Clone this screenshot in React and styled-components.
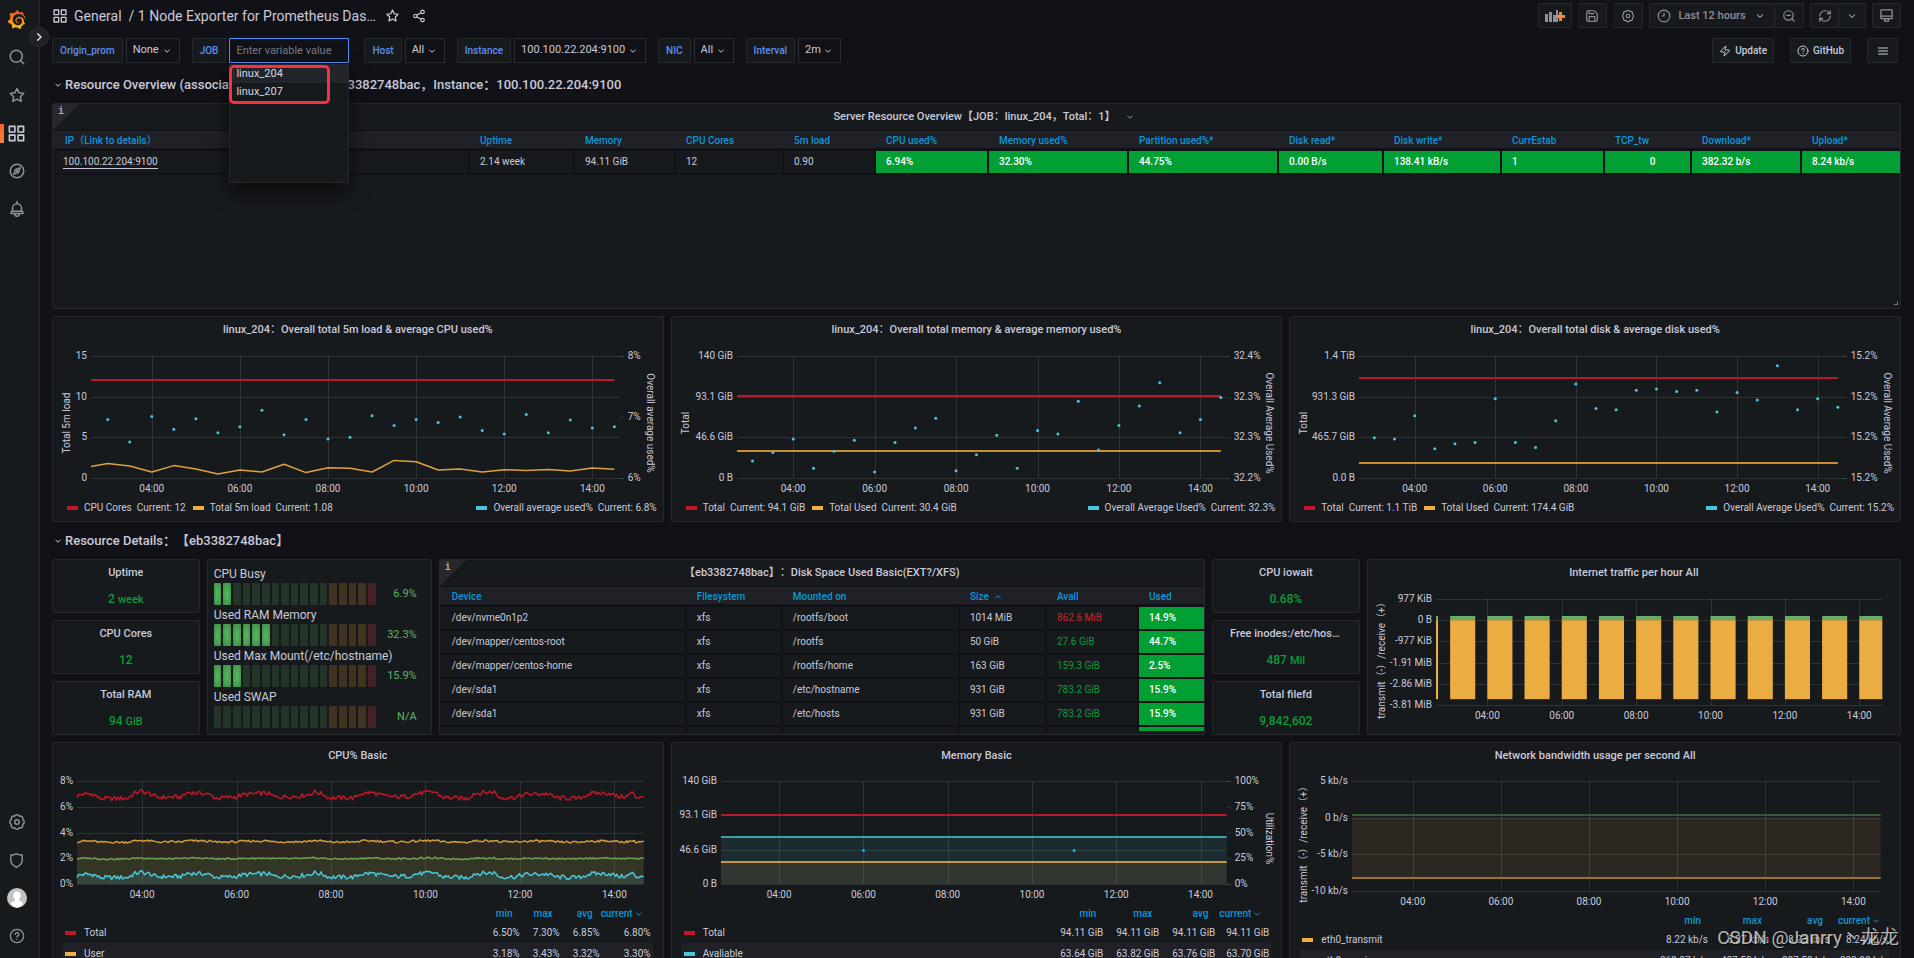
import React, { useLayoutEffect, useRef, useState } from 'react';
import styled, { createGlobalStyle, css } from 'styled-components';
import { RefreshCw, Share2, Zap, ZoomOut, Save } from 'lucide-react';
import { SiGrafana } from 'react-icons/si';

const c = {
  canvas: '#111217',
  panel: '#171a1d',
  border: '#25272c',
  soft: '#202126',
  text: '#c9c9d9',
  muted: '#8e8f9b',
  link: '#5c8ff0',
  head: '#0d95d6',
  cell: '#029f34',
  green: '#0b9b3a',
  red: '#b9182b',
  swatchRed: '#c4162a',
  amber: '#efae43',
  cyan: '#4bc5da',
  grid: 'rgba(204, 214, 214, 0.13)',
};

const GlobalStyle = createGlobalStyle`
  * { box-sizing: border-box; }
  body {
    margin: 0;
    background: ${c.canvas};
    color: ${c.text};
    font: 400 10px/16px Roboto, "Noto Sans CJK SC", sans-serif;
    text-spacing-trim: space-all;
  }
  button, input, select { font: inherit; color: inherit; }
  a { color: inherit; text-decoration: none; }
`;

/* ---------- icons ---------- */

const Svg = styled.svg`
  display: block;
  flex: none;
  fill: ${(p) => (p.$solid ? 'currentColor' : 'none')};
  stroke: ${(p) => (p.$solid ? 'none' : 'currentColor')};
  stroke-width: 2;
  stroke-linecap: round;
  stroke-linejoin: round;
`;

const Icon = ({ size = 16, solid, children }) => (
  <Svg $solid={solid} width={size} height={size} viewBox="0 0 24 24" aria-hidden="true">
    {children}
  </Svg>
);

const gearPath = (() => {
  const pt = (k) => {
    const a = ((22.5 + 45 * k) * Math.PI) / 180;
    return `${(12 + 8.2 * Math.cos(a)).toFixed(2)} ${(12 + 8.2 * Math.sin(a)).toFixed(2)}`;
  };
  let d = `M${pt(0)}`;
  for (let k = 1; k <= 8; k += 1) d += `A3.4 3.4 0 0 1 ${pt(k)}`;
  return `${d}Z`;
})();

const Gear = (p) => (
  <Icon {...p}>
    <path d={gearPath} />
    <circle cx="12" cy="12" r="3" />
  </Icon>
);
const Search = (p) => (
  <Icon {...p}>
    <circle cx="11" cy="11" r="8" />
    <path d="M17 17l4 4" />
  </Icon>
);
const Star = (p) => (
  <Icon {...p}>
    <path d="M12 3.4l2.8 5.7 6.2.9-4.5 4.4 1.1 6.2-5.6-3-5.6 3 1.1-6.2L3 10l6.2-.9z" />
  </Icon>
);
const Apps = (p) => (
  <Icon {...p}>
    <path d="M3 3h7v7H3zM14 3h7v7h-7zM3 14h7v7H3zM14 14h7v7h-7z" />
  </Icon>
);
const Compass = (p) => (
  <Icon {...p}>
    <circle cx="12" cy="12" r="9" />
    <path d="M16.2 7.8l-2.2 6.2-6.2 2.2 2.2-6.2z" />
    <circle cx="12" cy="12" r="0.6" />
  </Icon>
);
const Bell = (p) => (
  <Icon {...p}>
    <path d="M12 2v3M6 15v-4a6 6 0 0 1 12 0v4M4 18v-1a2 2 0 0 1 2-2h12a2 2 0 0 1 2 2v1zM9 18.500a3 3 0 0 0 6 0" />
  </Icon>
);
const Shield = (p) => (
  <Icon {...p}>
    <path d="M4 4c3 .6 5.600 0 8-1.600C14.400 4 17 4.600 20 4v8c0 4.200-4 7.600-8 9.800-4-2.200-8-5.600-8-9.800z" />
  </Icon>
);
const Help = (p) => (
  <Icon {...p}>
    <circle cx="12" cy="12" r="10" />
    <path d="M9.400 9.400a2.700 2.700 0 1 1 3.900 2.500c-.8.4-1.300.9-1.300 1.700M12 17v.1" />
  </Icon>
);
const Clock = (p) => (
  <Icon {...p}>
    <circle cx="12" cy="12" r="10" />
    <path d="M12 7v5H8.500" />
  </Icon>
);
const Display = (p) => (
  <Icon {...p}>
    <path d="M4 3h16a1 1 0 0 1 1 1v12a1 1 0 0 1-1 1H4a1 1 0 0 1-1-1V4a1 1 0 0 1 1-1zM3 13h18M9 17v4h6v-4" />
  </Icon>
);
const Bars = (p) => (
  <Icon {...p}>
    <path d="M3 6h18M3 12h18M3 18h18" />
  </Icon>
);
const Down = ({ size = 12 }) => (
  <Icon size={size}>
    <path d="M7.500 10l4.500 4.500L16.500 10" />
  </Icon>
);
const Up = ({ size = 14 }) => (
  <Icon size={size}>
    <path d="M7 14l5-4.500L17 14" />
  </Icon>
);
const AddPanel = () => (
  <svg width="20" height="14" viewBox="0 0 20 14" aria-hidden="true">
    <path fill="#8e8f9b" d="M0 5h3v8H0zM4 3h3v10H4zM8 6h3v7H8zM11 1h2v12h-2z" />
    <path fill="#f58b2c" d="M14 3h3v3h3v3h-3v3h-3V9h-2V6h2z" />
  </svg>
);

/* ---------- sidebar ---------- */

const Shell = styled.div`
  display: flex;
  height: 100vh;
  overflow: hidden;
  position: relative;
`;

const Sidebar = styled.nav`
  position: relative;
  flex: none;
  width: 40px;
  display: flex;
  flex-direction: column;
  justify-content: space-between;
  padding: 0 0 3px;
  background: ${c.panel};
  border-right: 1px solid ${c.border};
`;

const NavGroup = styled.div`
  display: flex;
  flex-direction: column;
  width: 33px;
`;

const NavLink = styled.a`
  display: flex;
  align-items: center;
  justify-content: center;
  height: 38px;
  color: ${(p) => (p.$active ? c.text : c.muted)};
  ${(p) =>
    p.$active &&
    css`
      background: linear-gradient(#f2622f, #f9813a) 0 50% / 4px 19px no-repeat;
    `}
`;

const Expand = styled.button`
  position: absolute;
  top: 27px;
  left: 29px;
  width: 20px;
  height: 20px;
  padding: 0;
  display: grid;
  place-items: center;
  border: 1px solid #2b2d33;
  border-radius: 50%;
  background: #202226;
  color: #e4e4ee;
  z-index: 2;
`;

const Avatar = () => (
  <svg width="20" height="20" viewBox="0 0 20 20" aria-hidden="true">
    <circle cx="10" cy="10" r="10" fill="#c3c3c3" />
    <path
      fill="#fff"
      d="M10 3.500c2.300 0 3.700 1.600 3.700 4 0 1.700-.7 3-1.500 3.800v1.400c2 .8 3.300 1.600 4 3.100A9.900 9.900 0 0 1 10 20a9.900 9.900 0 0 1-6.200-4.200c.7-1.500 2-2.300 4-3.100v-1.400C7 10.500 6.300 9.200 6.300 7.500c0-2.400 1.400-4 3.700-4z"
    />
  </svg>
);

const SideNav = () => (
  <Sidebar>
    <svg width="0" height="0" style={{ position: 'absolute' }} aria-hidden="true">
      <linearGradient id="flame" x1="0" y1="0" x2="0" y2="1">
        <stop offset="0" stopColor="#f04e28" />
        <stop offset="1" stopColor="#fcc21b" />
      </linearGradient>
    </svg>
    <NavGroup>
      <NavLink href="#home" aria-label="Home">
        <SiGrafana size={19} style={{ fill: 'url(#flame)' }} />
      </NavLink>
      <NavLink href="#search" aria-label="Search"><Search size={18} /></NavLink>
      <NavLink href="#starred" aria-label="Starred"><Star size={18} /></NavLink>
      <NavLink href="#dashboards" aria-label="Dashboards" $active><Apps size={19} /></NavLink>
      <NavLink href="#explore" aria-label="Explore"><Compass size={18} /></NavLink>
      <NavLink href="#alerting" aria-label="Alerting"><Bell size={18} /></NavLink>
    </NavGroup>
    <NavGroup>
      <NavLink href="#config" aria-label="Configuration"><Gear size={18} /></NavLink>
      <NavLink href="#admin" aria-label="Server admin"><Shield size={17} /></NavLink>
      <NavLink href="#profile" aria-label="Profile"><Avatar /></NavLink>
      <NavLink href="#help" aria-label="Help"><Help size={16} /></NavLink>
    </NavGroup>
    <Expand aria-label="Expand menu">
      <Icon size={16}><path d="M10 7l5 5-5 5" /></Icon>
    </Expand>
  </Sidebar>
);

/* ---------- top bars ---------- */

const Page = styled.main`
  flex: 1;
  min-width: 0;
  overflow: auto;
  scrollbar-width: none;
  padding: 3px 13px 12px 12px;
`;

const TopBar = styled.header`
  display: flex;
  align-items: center;
  justify-content: space-between;
  height: 25px;
`;

const Crumbs = styled.div`
  display: flex;
  align-items: center;
  font-size: 14px;
  line-height: 20px;
  height: 25px;
`;

const Crumb = styled.a`
  margin-left: 6px;
`;

const CrumbTitle = styled.h1`
  margin: 0 6px 0 7px;
  font: inherit;
  max-width: 250px;
  white-space: nowrap;
  overflow: hidden;
  text-overflow: ellipsis;
`;

const IconButton = styled.button`
  display: grid;
  place-items: center;
  padding: 0;
  margin-right: 12px;
  background: none;
  border: 0;
`;

const Tools = styled.div`
  display: flex;
  gap: 6px;
`;

const Joined = styled.div`
  display: flex;
`;

const Tool = styled.button`
  display: flex;
  align-items: center;
  justify-content: center;
  gap: 7px;
  height: 25px;
  min-width: ${(p) => p.$w || 29}px;
  padding: 0 5px;
  color: ${c.muted};
  background: ${c.panel};
  border: 1px solid ${c.border};
  border-radius: 1px;
  font-size: 11px;
  font-weight: 500;
  & + & { border-left: 0; }
`;

const VarBar = styled.div`
  display: flex;
  align-items: center;
  justify-content: space-between;
  margin-top: 10px;
  padding-right: 3px;
`;

const Vars = styled.form`
  display: flex;
  gap: 12px;
`;

const VarGroup = styled.div`
  position: relative;
  display: flex;
  gap: 3px;
  margin-right: ${(p) => (p.$wide ? 3 : 0)}px;
`;

const VarLabel = styled.label`
  display: flex;
  align-items: center;
  height: 25px;
  padding: 0 7px;
  color: ${c.link};
  font-weight: 500;
  background: ${c.panel};
  border: 1px solid ${c.border};
  border-radius: 1px;
`;

const SelectWrap = styled.div`
  position: relative;
  display: flex;
  align-items: center;
  svg {
    position: absolute;
    right: 7px;
    pointer-events: none;
  }
`;

const Select = styled.select`
  appearance: none;
  height: 25px;
  padding: 0 19px 2px 6px;
  font-size: 11px;
  background: ${c.canvas};
  border: 1px solid #2b2d33;
  border-radius: 1px;
`;

const VarInput = styled.input`
  width: 120px;
  height: 25px;
  padding: 0 6px;
  font-size: 11px;
  color: ${c.text};
  background: ${c.canvas};
  border: 1px solid #5490f5;
  border-radius: 1px;
  outline: none;
  &::placeholder { color: #797a85; }
`;

const Menu = styled.ul`
  position: absolute;
  top: 26px;
  right: 0;
  width: 120px;
  height: 119px;
  margin: 0;
  padding: 0;
  list-style: none;
  background: ${c.panel};
  border: 1px solid ${c.border};
  box-shadow: 0 8px 18px rgba(0, 0, 0, 0.6);
  z-index: 5;
`;

const Option = styled.li`
  height: 18px;
  padding: 0 6px;
  font-size: 11px;
  line-height: 18px;
  color: #d6d6e2;
  background: ${(p) => (p.$on ? '#22252a' : 'transparent')};
`;

const Highlight = styled.span`
  position: absolute;
  top: 0;
  left: -1px;
  width: 101px;
  height: 39px;
  border: 3px solid #f6323f;
  border-radius: 5px;
`;

const Links = styled.div`
  display: flex;
  gap: 16px;
`;

const DashLink = styled.a`
  display: flex;
  align-items: center;
  justify-content: center;
  gap: 4px;
  height: 25px;
  min-width: 31px;
  padding: 0 6px;
  font-weight: 500;
  background: ${c.panel};
  border: 1px solid ${c.border};
  border-radius: 1px;
`;

const Variable = ({ label, value }) => (
  <VarGroup>
    <VarLabel htmlFor={`var-${label}`}>{label}</VarLabel>
    <SelectWrap>
      <Select id={`var-${label}`} defaultValue={value}>
        <option>{value}</option>
      </Select>
      <Down size={12} />
    </SelectWrap>
  </VarGroup>
);

/* ---------- panels ---------- */

const RowTitle = styled.h2`
  display: flex;
  align-items: center;
  gap: 1px;
  margin: 0;
  height: ${(p) => (p.$first ? 40 : 37)}px;
  padding: ${(p) => (p.$first ? '4px' : '0')} 0 0 0;
  font-size: 13px;
  font-weight: 500;
`;

const Grid = styled.div`
  display: grid;
  grid-template-columns: repeat(24, minmax(0, 1fr));
  gap: 7px;
`;

const Panel = styled.section`
  position: relative;
  grid-column: span ${(p) => p.$span};
  min-width: 0;
  height: ${(p) => (p.$h ? `${p.$h}px` : 'auto')};
  display: flex;
  flex-direction: column;
  overflow: hidden;
  background: ${c.panel};
  border: 1px solid ${c.border};
  border-radius: 2px;
`;

const PanelTitle = styled.h3`
  flex: none;
  display: flex;
  align-items: center;
  justify-content: center;
  gap: 8px;
  margin: 0;
  height: 26px;
  padding: 0 17px;
  font-size: 11px;
  font-weight: 500;
  span {
    overflow: hidden;
    text-overflow: ellipsis;
    white-space: nowrap;
  }
  svg {
    margin-right: -16px;
    color: ${c.muted};
  }
`;

const Info = styled.button`
  position: absolute;
  top: 0;
  left: 0;
  width: 26px;
  height: 26px;
  padding: 0 0 10px 5px;
  text-align: left;
  font: 700 10px/14px "Liberation Mono", monospace;
  color: #a9aab5;
  background: #26282c;
  border: 0;
  clip-path: polygon(0 0, 100% 0, 0 100%);
`;

const Corner = styled.span`
  position: absolute;
  right: 2px;
  bottom: 3px;
  width: 4px;
  height: 4px;
  border: solid #73747c;
  border-width: 0 1px 1px 0;
`;

const Table = styled.table`
  width: 100%;
  table-layout: fixed;
  border-spacing: 0;
  text-align: left;
`;

const Th = styled.th`
  height: 21px;
  padding: 2px 0 0 10px;
  border-top: 1px solid ${c.canvas};
  border-bottom: 3px solid ${c.canvas};
  background: ${c.soft};
  color: ${c.head};
  font-weight: 500;
  line-height: 14px;
  white-space: nowrap;
  &:first-child { padding-left: 12px; }
  svg { display: inline; vertical-align: -3px; margin-left: 3px; }
`;

const tones = { green: c.green, red: '#c9252d' };

const Td = styled.td`
  height: 24px;
  padding: 0 0 0 10px;
  white-space: nowrap;
  border-bottom: 2px solid ${c.canvas};
  border-right: 2px solid ${c.canvas};
  color: ${(p) => tones[p.$tone] || c.text};
  &:first-child { padding-left: ${(p) => (p.$tight ? 10 : 12)}px; }
  &:last-child { border-right: 0; }
  ${(p) =>
    p.$fill &&
    css`
      background: ${c.cell};
      color: #fff;
      font-weight: 500;
    `}
  ${(p) => p.$center && 'text-align: center;'}
`;

const HostLink = styled.a`
  padding-bottom: 1px;
  border-bottom: 1px solid currentColor;
`;

const TableClip = styled.div`
  flex: none;
  height: ${(p) => p.$h}px;
  overflow: hidden;
`;

const overviewCols = [
  ['IP（Link to details）', 212], ['', 205], ['Uptime', 105], ['Memory', 101], ['CPU Cores', 108], ['5m load', 92],
  ['CPU used%', 113], ['Memory used%', 140], ['Partition used%*', 150], ['Disk read*', 105], ['Disk write*', 118],
  ['CurrEstab', 103], ['TCP_tw', 87], ['Download*', 110], ['Upload*', 98],
];
const overviewPlain = ['eb3382748bac', '2.14 week', '94.11 GiB', '12', '0.90'];
const overviewFilled = ['6.94%', '32.30%', '44.75%', '0.00 B/s', '138.41 kB/s', '1', '0', '382.32 b/s', '8.24 kb/s'];

const Cols = ({ widths }) => {
  const sum = widths.reduce((a, b) => a + b, 0);
  return (
    <colgroup>
      {widths.map((w, i) => (
        <col key={i} style={{ width: `${(w / sum) * 100}%` }} />
      ))}
    </colgroup>
  );
};

const Overview = () => (
  <Panel $span={24} $h={206}>
    <Info aria-label="Panel info">i</Info>
    <PanelTitle>
      <span>Server Resource Overview【JOB：linux_204，Total：1】</span>
      <Down size={12} />
    </PanelTitle>
    <Table>
      <Cols widths={overviewCols.map((x) => x[1])} />
      <thead>
        <tr>{overviewCols.map(([name]) => <Th key={name}>{name}</Th>)}</tr>
      </thead>
      <tbody>
        <tr>
          <Td $tight><HostLink href="#host">100.100.22.204:9100</HostLink></Td>
          {overviewPlain.map((v) => <Td key={v}>{v}</Td>)}
          {overviewFilled.map((v) => <Td key={v} $fill $center={v === '0'}>{v}</Td>)}
        </tr>
      </tbody>
    </Table>
    <Corner />
  </Panel>
);

const diskCols = [['Device', 247], ['Filesystem', 96], ['Mounted on', 177], ['Size', 87], ['Avail', 92], ['Used', 65]];
const disks = [
  ['/dev/nvme0n1p2', '/rootfs/boot', '1014 MiB', '862.6 MiB', '14.9%'],
  ['/dev/mapper/centos-root', '/rootfs', '50 GiB', '27.6 GiB', '44.7%'],
  ['/dev/mapper/centos-home', '/rootfs/home', '163 GiB', '159.3 GiB', '2.5%'],
  ['/dev/sda1', '/etc/hostname', '931 GiB', '783.2 GiB', '15.9%'],
  ['/dev/sda1', '/etc/hosts', '931 GiB', '783.2 GiB', '15.9%'],
  ['', '', '', '', ''],
];

const DiskTable = () => (
  <Panel $span={10} $h={176}>
    <Info aria-label="Panel info">i</Info>
    <PanelTitle><span>【eb3382748bac】：Disk Space Used Basic(EXT?/XFS)</span></PanelTitle>
    <TableClip $h={145}>
      <Table>
        <Cols widths={diskCols.map((x) => x[1])} />
        <thead>
          <tr>
            {diskCols.map(([name]) => (
              <Th key={name}>{name}{name === 'Size' && <Up size={12} />}</Th>
            ))}
          </tr>
        </thead>
        <tbody>
          {disks.map(([dev, mount, size, avail, used], i) => (
            <tr key={i}>
              <Td>{dev}</Td>
              <Td>{dev && 'xfs'}</Td>
              <Td>{mount}</Td>
              <Td>{size}</Td>
              <Td $tone={i === 0 ? 'red' : 'green'}>{avail}</Td>
              <Td $fill>{used}</Td>
            </tr>
          ))}
        </tbody>
      </Table>
    </TableClip>
  </Panel>
);

const StatStack = styled.div`
  grid-column: span 2;
  display: grid;
  grid-template-rows: repeat(3, minmax(0, 1fr));
  gap: 7px;
`;

const StatValue = styled.div`
  flex: 1;
  display: flex;
  align-items: baseline;
  justify-content: center;
  gap: 3px;
  padding-top: 5px;
  color: ${c.green};
  font-size: 12px;
  font-weight: 500;
  small { font-size: 11px; }
`;

const Stats = ({ items }) => (
  <StatStack>
    {items.map(([title, value, unit]) => (
      <Panel key={title} $span={1}>
        <PanelTitle><span>{title}</span></PanelTitle>
        <StatValue>{value}{unit && <small>{unit}</small>}</StatValue>
      </Panel>
    ))}
  </StatStack>
);

const Gauges = styled.div`
  display: grid;
  gap: 2px;
  padding: 6px 14px 0 6px;
`;

const GaugeName = styled.div`
  font-size: 12px;
  line-height: 17px;
`;

const GaugeRow = styled.div`
  display: flex;
  align-items: center;
  height: 22px;
`;

const Cells = styled.div`
  flex: 1;
  display: flex;
  gap: 2px;
  height: 22px;
`;

const cellFill = {
  lit: 'radial-gradient(ellipse at center, #56b65c 10%, #3c8a48 100%)',
  green: '#233429',
  orange: '#403421',
  red: '#452027',
};

const Cell = styled.i`
  flex: 1;
  border-radius: 1px;
  background: ${(p) => cellFill[p.$kind]};
`;

const GaugeValue = styled.output`
  width: 41px;
  text-align: right;
  font-size: 11px;
  color: #5ab65e;
`;

const gauges = [['CPU Busy', 2, '6.9%'], ['Used RAM Memory', 6, '32.3%'], ['Used Max Mount(/etc/hostname)', 3, '15.9%'], ['Used SWAP', 0, 'N/A']];

const cellKind = (i, lit) => {
  if (i < lit) return 'lit';
  if (i < 12) return 'green';
  return i < 16 ? 'orange' : 'red';
};

const GaugePanel = () => (
  <Panel $span={3} $h={176}>
    <Gauges>
      {gauges.map(([name, lit, value]) => (
        <div key={name}>
          <GaugeName>{name}</GaugeName>
          <GaugeRow>
            <Cells>{Array.from({ length: 17 }, (_, i) => <Cell key={i} $kind={cellKind(i, lit)} />)}</Cells>
            <GaugeValue>{value}</GaugeValue>
          </GaugeRow>
        </div>
      ))}
    </Gauges>
  </Panel>
);

/* ---------- charts ---------- */

const Plot = styled.svg`
  flex: none;
  display: block;
  width: 100%;
  text { fill: ${c.text}; font-size: 10px; }
`;

const T0 = 2.62;
const T1 = 14.62;

function Chart({ height, top, bottom, left, right, leftTicks, rightTicks, leftName, rightName, children }) {
  const ref = useRef(null);
  const [width, setWidth] = useState(0);
  useLayoutEffect(() => {
    const measure = () => setWidth(ref.current.getBoundingClientRect().width);
    measure();
    const ro = new ResizeObserver(measure);
    ro.observe(ref.current);
    return () => ro.disconnect();
  }, []);
  const end = width - right;
  const x = (t) => left + ((t - T0) / (T1 - T0)) * (end - left);
  const y = (f) => bottom - f * (bottom - top);
  const snap = (v) => Math.round(v) + 0.5;
  const mid = (top + bottom) / 2 + 6;
  return (
    <Plot ref={ref} height={height}>
      {width > 0 && (
        <>
          {leftTicks.map((label, i) => {
            const f = 1 - i / (leftTicks.length - 1);
            const extra = rightTicks && (i === 0 || i === leftTicks.length - 1) ? 4 : 0;
            return (
              <g key={label}>
                <line x1={left} x2={end + extra} y1={snap(y(f))} y2={snap(y(f))} stroke={c.grid} />
                <text x={left - 4} y={y(f) + 3} textAnchor="end">{label}</text>
              </g>
            );
          })}
          {rightTicks &&
            rightTicks.map((label, i) => {
              const f = 1 - i / (rightTicks.length - 1);
              return (
                <g key={i}>
                  <line x1={end} x2={end + 4} y1={snap(y(f))} y2={snap(y(f))} stroke={c.grid} />
                  <text x={end + 8} y={y(f) + 3}>{label}</text>
                </g>
              );
            })}
          {[4, 6, 8, 10, 12, 14].map((h) => (
            <g key={h}>
              <line x1={snap(x(h))} x2={snap(x(h))} y1={top} y2={bottom} stroke={c.grid} />
              <text x={x(h)} y={bottom + 14} textAnchor="middle">{`${String(h).padStart(2, '0')}:00`}</text>
            </g>
          ))}
          {leftName && <text transform={`translate(17 ${mid}) rotate(-90)`} textAnchor="middle">{leftName}</text>}
          {rightName && <text transform={`translate(${width - 16} ${mid}) rotate(90)`} textAnchor="middle">{rightName}</text>}
          {children({ x, y, end })}
        </>
      )}
    </Plot>
  );
}

const HLine = ({ s, f, color, until = 14.5, w = 2 }) => (
  <line x1={s.x(T0)} x2={s.x(until)} y1={Math.round(s.y(f))} y2={Math.round(s.y(f))} stroke={color} strokeWidth={w} />
);

const Dots = ({ s, values, from = 3, step = 0.5, color = c.cyan }) =>
  values.map((v, i) => <circle key={i} cx={s.x(from + i * step)} cy={s.y(v)} r="1.5" fill={color} />);

const linePath = (s, pts) => pts.map(([t, f], i) => `${i ? 'L' : 'M'}${s.x(t).toFixed(1)} ${s.y(f).toFixed(1)}`).join('');

const Legend = styled.div`
  display: flex;
  align-items: center;
  gap: 7px;
  height: 20px;
  padding: 0 6px 0 14px;
  white-space: nowrap;
`;

const LegendItem = styled.span`
  display: flex;
  align-items: center;
  gap: 6px;
  margin-left: ${(p) => (p.$end ? 'auto' : '0')};
`;

const Swatch = styled.i`
  display: inline-block;
  width: 11px;
  height: 4px;
  background: ${(p) => p.$c};
`;

const Key = ({ color, name, current, end }) => (
  <LegendItem $end={end}>
    <Swatch $c={color} />
    <span>{name}&nbsp; Current: {current}</span>
  </LegendItem>
);

const ChartPanel = ({ title, span = 8, h, children }) => (
  <Panel $span={span} $h={h}>
    <PanelTitle><span>{title}</span></PanelTitle>
    {children}
  </Panel>
);

const cpuAvg = [6.96, 6.59, 7.01, 6.8, 6.97, 6.74, 6.84, 7.11, 6.71, 6.96, 6.64, 6.67, 7.02, 6.86, 6.96, 6.91, 7, 6.78, 6.72, 7.04, 6.74, 6.95, 6.82, 6.84];
const load = [1.8, 1.48, 0.74, 1.52, 1.11, 0.49, 0.98, 0.74, 1.68, 0.66, 1.27, 1.19, 0.74, 2.17, 2, 0.98, 1.11, 0.74, 1.02, 0.94, 1.05, 0.86, 1.22, 1.08];
const memAvg = [14, 21, 32, 8, 22, 31, 5, 29, 41, 49, 6, 19, 35, 8, 39, 36, 63, 23, 43, 59, 78, 37, 48, 66];
const diskAvg = [33, 32, 51, 24, 28, 29, 65, 29, 25, 47, 77, 57, 56, 72, 73, 71, 72, 54, 70, 64, 92, 56, 65, 58];

/* Slow trend of CPU usage over the plotted range, as [share of the range, percent]. */
const trend = [
  [0, 6.8], [0.01, 6.98], [0.03, 6.95], [0.04, 6.62], [0.09, 6.65], [0.1, 7], [0.112, 7.2], [0.13, 6.98], [0.14, 6.72],
  [0.185, 6.75], [0.195, 7.1], [0.23, 7], [0.245, 6.66], [0.28, 6.75], [0.295, 6.95], [0.335, 7.05], [0.35, 6.75],
  [0.39, 6.8], [0.41, 6.95], [0.42, 7.15], [0.435, 6.95], [0.445, 6.68], [0.49, 6.68], [0.5, 7], [0.52, 7.1], [0.54, 6.85],
  [0.56, 6.75], [0.585, 6.8], [0.6, 7.02], [0.632, 7.15], [0.645, 6.72], [0.69, 6.62], [0.7, 7.02], [0.737, 7.15],
  [0.745, 6.7], [0.775, 6.72], [0.79, 6.95], [0.83, 7], [0.845, 6.7], [0.885, 6.62], [0.905, 7.02], [0.94, 7.05],
  [0.955, 6.75], [0.972, 6.8], [0.979, 7.15], [0.986, 6.7], [1, 6.85],
];

const noise = (i, seed) => {
  const v = Math.sin(i * 12.9898 + seed * 78.233) * 43758.5453;
  return v - Math.floor(v) - 0.5;
};

const trendAt = (p) => {
  const k = Math.max(1, trend.findIndex(([q]) => q >= p));
  const [a, va] = trend[k - 1];
  const [b, vb] = trend[k];
  return va + ((p - a) / (b - a)) * (vb - va);
};

const cpuSeries = (base, swing, jitter, seed) =>
  Array.from({ length: 361 }, (_, i) => {
    const p = i / 360;
    const v = base + (trendAt(p) - 6.85) * swing + noise(i, seed) * jitter;
    return [T0 + p * (T1 - T0), v / 8];
  });

const cpuTotal = cpuSeries(6.86, 1, 0.34, 1);
const cpuUser = cpuSeries(3.3, 0.25, 0.16, 2);
const cpuSystem = cpuSeries(1.98, 0.15, 0.12, 3);
const cpuIo = cpuSeries(0.66, 0.75, 0.34, 1);

const Area = ({ s, pts, fill }) => (
  <path d={`${linePath(s, pts)}L${s.x(T1)} ${s.y(0)}L${s.x(T0)} ${s.y(0)}Z`} fill={fill} />
);
const Trace = ({ s, pts, color, w = 1.5 }) => (
  <path d={linePath(s, pts)} fill="none" stroke={color} strokeWidth={w} strokeLinejoin="round" />
);

const SeriesTable = styled.table`
  flex: none;
  table-layout: fixed;
  border-spacing: 0;
  width: calc(100% - 20px);
  margin: 0 10px;
  text-align: right;
  th {
    height: 17px;
    padding: 0 7px 0 0;
    color: ${c.head};
    font-weight: 500;
    line-height: 16px;
    white-space: nowrap;
  }
  th:last-child { padding-right: 8px; }
  th:last-child svg { display: inline; vertical-align: -3px; }
  td {
    height: 21px;
    padding: 0;
    white-space: nowrap;
  }
  td:last-child { padding-right: 2px; }
  td:first-child { text-align: left; padding-left: 2px; }
  tbody tr:nth-child(even) { background: ${c.soft}; }
`;

const SeriesName = styled.span`
  display: flex;
  align-items: center;
  gap: 8px;
`;

const Series = ({ width, last, rows }) => (
  <SeriesTable>
    <colgroup>
      <col />
      <col width={width} />
      <col width={width} />
      <col width={width} />
      <col width={last} />
    </colgroup>
    <thead>
      <tr>
        <th aria-label="Series" />
        <th>min</th>
        <th>max</th>
        <th>avg</th>
        <th>current<Down size={12} /></th>
      </tr>
    </thead>
    <tbody>
      {rows.map(([color, name, ...vals]) => (
        <tr key={name}>
          <td><SeriesName><Swatch $c={color} />{name}</SeriesName></td>
          {vals.map((v, i) => <td key={i}>{v}</td>)}
        </tr>
      ))}
    </tbody>
  </SeriesTable>
);

const Watermark = styled.div`
  position: absolute;
  right: 15px;
  bottom: 8px;
  font-size: 19px;
  line-height: 24px;
  color: rgba(225, 225, 225, 0.8);
  text-shadow: 1px 1px 1px rgba(0, 0, 0, 0.7);
  pointer-events: none;
`;

export default function App() {
  return (
    <Shell>
      <GlobalStyle />
      <SideNav />
      <Page>
        <TopBar>
          <Crumbs>
            <Apps size={16} />
            <Crumb href="#general">General</Crumb>
            <CrumbTitle>/ 1 Node Exporter for Prometheus Dashboard EN 20201010</CrumbTitle>
            <IconButton aria-label="Mark as favorite"><Star size={15} /></IconButton>
            <IconButton aria-label="Share dashboard"><Share2 size={14} /></IconButton>
          </Crumbs>
          <Tools>
            <Tool $w={34} aria-label="Add panel"><AddPanel /></Tool>
            <Tool aria-label="Save dashboard"><Save size={14} /></Tool>
            <Tool $w={30} aria-label="Dashboard settings"><Gear size={14} /></Tool>
            <Joined>
              <Tool $w={126}><Clock size={14} />Last 12 hours<Down size={14} /></Tool>
              <Tool aria-label="Zoom out"><ZoomOut size={14} /></Tool>
            </Joined>
            <Joined>
              <Tool aria-label="Refresh"><RefreshCw size={14} /></Tool>
              <Tool $w={27} aria-label="Refresh interval"><Down size={14} /></Tool>
            </Joined>
            <Tool aria-label="Cycle view mode"><Display size={15} /></Tool>
          </Tools>
        </TopBar>

        <VarBar>
          <Vars>
            <Variable label="Origin_prom" value="None" />
            <VarGroup $wide>
              <VarLabel htmlFor="var-job">JOB</VarLabel>
              <VarInput id="var-job" type="text" placeholder="Enter variable value" />
              <Menu role="listbox" aria-label="JOB">
                <Option role="option" aria-selected="true" $on>linux_204</Option>
                <Option role="option" aria-selected="false">linux_207</Option>
                <Highlight />
              </Menu>
            </VarGroup>
            <Variable label="Host" value="All" />
            <Variable label="Instance" value="100.100.22.204:9100" />
            <Variable label="NIC" value="All" />
            <Variable label="Interval" value="2m" />
          </Vars>
          <Links>
            <DashLink href="#update"><Zap size={12} />Update</DashLink>
            <DashLink href="#github"><Help size={12} />GitHub</DashLink>
            <DashLink as="button" aria-label="Dashboards list"><Bars size={12} /></DashLink>
          </Links>
        </VarBar>

        <RowTitle $first><Down size={12} />Resource Overview (associated JOB)，Host：eb3382748bac，Instance：100.100.22.204:9100</RowTitle>
        <Grid>
          <Overview />
          <ChartPanel title="linux_204：Overall total 5m load & average CPU used%" h={206}>
            <Chart height={155} top={13} bottom={135} left={38} right={43} leftTicks={['15', '10', '5', '0']} rightTicks={['8%', '7%', '6%']} leftName="Total 5m load" rightName="Overall average used%">
              {(s) => (
                <>
                  <HLine s={s} f={0.8} color={c.red} />
                  <Trace s={s} color="#dca23c" pts={[[T0, 1.43 / 15], ...load.map((v, i) => [3 + i / 2, v / 15])]} />
                  <Dots s={s} values={cpuAvg.map((v) => (v - 6) / 2)} />
                </>
              )}
            </Chart>
            <Legend>
              <Key color={c.swatchRed} name="CPU Cores" current="12" />
              <Key color={c.amber} name="Total 5m load" current="1.08" />
              <Key end color={c.cyan} name="Overall average used%" current="6.8%" />
            </Legend>
          </ChartPanel>
          <ChartPanel title="linux_204：Overall total memory & average memory used%" h={206}>
            <Chart height={155} top={13} bottom={135} left={65} right={56} leftTicks={['140 GiB', '93.1 GiB', '46.6 GiB', '0 B']} rightTicks={['32.4%', '32.3%', '32.3%', '32.2%']} leftName="Total" rightName="Overall Average Used%">
              {(s) => (
                <>
                  <HLine s={s} f={0.672} color={c.red} />
                  <HLine s={s} f={0.219} color="#c88e33" />
                  <Dots s={s} values={memAvg.map((v) => v / 100)} />
                </>
              )}
            </Chart>
            <Legend>
              <Key color={c.swatchRed} name="Total" current="94.1 GiB" />
              <Key color={c.amber} name="Total Used" current="30.4 GiB" />
              <Key end color={c.cyan} name="Overall Average Used%" current="32.3%" />
            </Legend>
          </ChartPanel>
          <ChartPanel title="linux_204：Overall total disk & average disk used%" h={206}>
            <Chart height={155} top={13} bottom={135} left={69} right={57} leftTicks={['1.4 TiB', '931.3 GiB', '465.7 GiB', '0.0 B']} rightTicks={['15.2%', '15.2%', '15.2%', '15.2%']} leftName="Total" rightName="Overall Average Used%">
              {(s) => (
                <>
                  <HLine s={s} f={0.822} color={c.red} />
                  <HLine s={s} f={0.126} color="#c88e33" />
                  <Dots s={s} values={diskAvg.map((v) => v / 100)} />
                </>
              )}
            </Chart>
            <Legend>
              <Key color={c.swatchRed} name="Total" current="1.1 TiB" />
              <Key color={c.amber} name="Total Used" current="174.4 GiB" />
              <Key end color={c.cyan} name="Overall Average Used%" current="15.2%" />
            </Legend>
          </ChartPanel>
        </Grid>

        <RowTitle><Down size={12} />Resource Details：【eb3382748bac】</RowTitle>
        <Grid>
          <Stats items={[['Uptime', '2', 'week'], ['CPU Cores', '12'], ['Total RAM', '94', 'GiB']]} />
          <GaugePanel />
          <DiskTable />
          <Stats items={[['CPU iowait', '0.68%'], ['Free inodes:/etc/hostname', '487', 'Mil'], ['Total filefd', '9,842,602']]} />
          <ChartPanel title="Internet traffic per hour All" span={7} h={176}>
            <Chart height={148} top={13} bottom={119} left={68} right={18} leftTicks={['977 KiB', '0 B', '-977 KiB', '-1.91 MiB', '-2.86 MiB', '-3.81 MiB']} leftName="transmit（-）/receive（+）">
              {(s) =>
                [2, 3, 4, 5, 6, 7, 8, 9, 10, 11, 12, 13, 14].map((h) => {
                  const a = Math.max(s.x(h), s.x(T0));
                  const b = Math.min(s.x(h + 0.675), s.end);
                  return (
                    <g key={h}>
                      <rect x={a} y={s.y(0.84)} width={b - a} height={s.y(0.8) - s.y(0.84)} fill="#6cab67" />
                      <rect x={a} y={s.y(0.8)} width={b - a} height={s.y(0.055) - s.y(0.8)} fill="#ebad41" />
                    </g>
                  );
                })
              }
            </Chart>
          </ChartPanel>

          <ChartPanel title="CPU% Basic" h={240}>
            <Chart height={136} top={12} bottom={115} left={24} right={19} leftTicks={['8%', '6%', '4%', '2%', '0%']}>
              {(s) => (
                <>
                  <Area s={s} pts={cpuUser} fill="rgba(234, 160, 60, 0.1)" />
                  <Area s={s} pts={cpuSystem} fill="rgba(110, 160, 70, 0.12)" />
                  <Area s={s} pts={cpuIo} fill="rgba(75, 197, 218, 0.12)" />
                  <Trace s={s} pts={cpuTotal} color={c.swatchRed} />
                  <Trace s={s} pts={cpuUser} color="#d29a3a" />
                  <Trace s={s} pts={cpuSystem} color="#6d9f52" />
                  <Trace s={s} pts={cpuIo} color={c.cyan} />
                </>
              )}
            </Chart>
            <Series
              width={40}
              last={53}
              rows={[
                [c.swatchRed, 'Total', '6.50%', '7.30%', '6.85%', '6.80%'],
                [c.amber, 'User', '3.18%', '3.43%', '3.32%', '3.30%'],
              ]}
            />
          </ChartPanel>
          <ChartPanel title="Memory Basic" h={240}>
            <Chart height={136} top={12} bottom={115} left={49} right={55} leftTicks={['140 GiB', '93.1 GiB', '46.6 GiB', '0 B']} rightTicks={['100%', '75%', '50%', '25%', '0%']} rightName="Utilization%">
              {(s) => (
                <>
                  <Area s={s} pts={[[T0, 0.457], [T1, 0.457]]} fill="rgba(75, 197, 218, 0.1)" />
                  <Area s={s} pts={[[T0, 0.218], [T1, 0.218]]} fill="rgba(234, 160, 60, 0.1)" />
                  <HLine s={s} f={0.672} color={c.red} until={T1} />
                  <HLine s={s} f={0.457} color="#3b9fb0" until={T1} />
                  <HLine s={s} f={0.218} color="#c59a3d" until={T1} />
                  <Dots s={s} values={[0.325, 0.325]} from={6} step={5} color="#10b5e6" />
                </>
              )}
            </Chart>
            <Series
              width={56}
              last={56}
              rows={[
                [c.swatchRed, 'Total', '94.11 GiB', '94.11 GiB', '94.11 GiB', '94.11 GiB'],
                [c.cyan, 'Avaliable', '63.64 GiB', '63.82 GiB', '63.76 GiB', '63.70 GiB'],
              ]}
            />
          </ChartPanel>
          <ChartPanel title="Network bandwidth usage per second All" h={240}>
            <Chart height={143} top={12} bottom={122} left={62} right={19} leftTicks={['5 kb/s', '0 b/s', '-5 kb/s', '-10 kb/s']} leftName="transmit（-）/receive（+）">
              {(s) => (
                <>
                  <rect x={s.x(T0)} y={s.y(0.667)} width={s.end - s.x(T0)} height={s.y(0.12) - s.y(0.667)} fill="rgba(234, 160, 60, 0.1)" />
                  <HLine s={s} f={0.69} color="#38573a" until={T1} />
                  <HLine s={s} f={0.12} color="#9d742e" until={T1} />
                </>
              )}
            </Chart>
            <Series
              width={61}
              last={60}
              rows={[
                [c.amber, 'eth0_transmit', '8.22 kb/s', '8.27 kb/s', '8.23 kb/s', '8.24 kb/s'],
                [c.green, 'eth0_receive', '268.87 b/s', '407.58 b/s', '287.58 b/s', '288.98 b/s'],
              ]}
            />
          </ChartPanel>
        </Grid>
      </Page>
      <Watermark>CSDN @Janrry丶龙龙</Watermark>
    </Shell>
  );
}
